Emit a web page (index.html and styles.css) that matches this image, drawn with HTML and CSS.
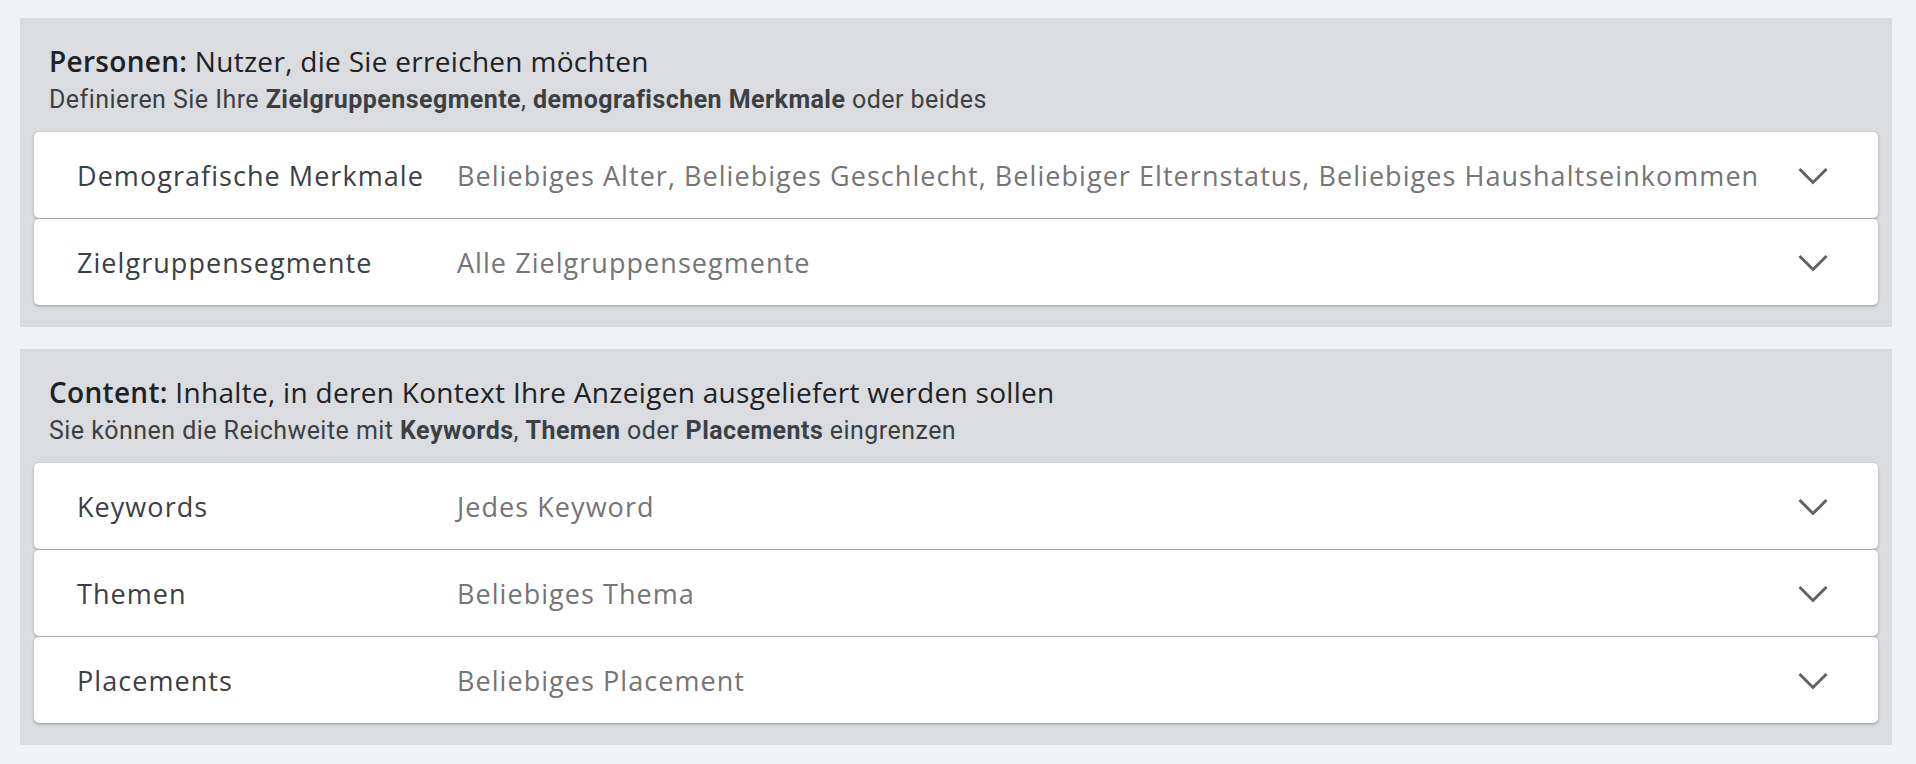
FILE: index.html
```html
<!DOCTYPE html>
<html lang="de">
<head>
<meta charset="utf-8">
<title>Targeting</title>
<link rel="stylesheet" href="styles.css">
</head>
<body>
<main class="page">
  <section class="panel">
    <header class="panel-head">
      <h2 class="panel-title"><strong>Personen:</strong> Nutzer, die Sie erreichen möchten</h2>
      <p class="panel-sub">Definieren Sie Ihre <b>Zielgruppensegmente</b>, <b>demografischen Merkmale</b> oder beides</p>
    </header>
    <div class="rows">
      <div class="row">
        <span class="row-label">Demografische Merkmale</span>
        <span class="row-value">Beliebiges Alter, Beliebiges Geschlecht, Beliebiger Elternstatus, Beliebiges Haushaltseinkommen</span>
        <svg class="chev" viewBox="0 0 30 18" width="30" height="18"><polyline points="1.5,2 15,15.5 28.5,2"/></svg>
      </div>
      <div class="row">
        <span class="row-label">Zielgruppensegmente</span>
        <span class="row-value">Alle Zielgruppensegmente</span>
        <svg class="chev" viewBox="0 0 30 18" width="30" height="18"><polyline points="1.5,2 15,15.5 28.5,2"/></svg>
      </div>
    </div>
  </section>
  <section class="panel">
    <header class="panel-head">
      <h2 class="panel-title"><strong>Content:</strong> Inhalte, in deren Kontext Ihre Anzeigen ausgeliefert werden sollen</h2>
      <p class="panel-sub">Sie können die Reichweite mit <b>Keywords</b>, <b>Themen</b> oder <b>Placements</b> eingrenzen</p>
    </header>
    <div class="rows">
      <div class="row">
        <span class="row-label">Keywords</span>
        <span class="row-value">Jedes Keyword</span>
        <svg class="chev" viewBox="0 0 30 18" width="30" height="18"><polyline points="1.5,2 15,15.5 28.5,2"/></svg>
      </div>
      <div class="row">
        <span class="row-label">Themen</span>
        <span class="row-value">Beliebiges Thema</span>
        <svg class="chev" viewBox="0 0 30 18" width="30" height="18"><polyline points="1.5,2 15,15.5 28.5,2"/></svg>
      </div>
      <div class="row">
        <span class="row-label">Placements</span>
        <span class="row-value">Beliebiges Placement</span>
        <svg class="chev" viewBox="0 0 30 18" width="30" height="18"><polyline points="1.5,2 15,15.5 28.5,2"/></svg>
      </div>
    </div>
  </section>
</main>
</body>
</html>
```

FILE: styles.css
```css
html, body {
  margin: 0;
  padding: 0;
  background: #f1f3f4;
}
.page {
  padding: 18px 24px 20px 20px;
  display: flex;
  flex-direction: column;
  gap: 22px;
}
.panel {
  background: #dadce0;
  padding: 0 14px 22px 14px;
}
.panel-head {
  padding: 25px 15px 16px 15px;
}
.panel-title {
  margin: 0;
  font-family: "Open Sans", Roboto, sans-serif;
  font-weight: 400;
  font-size: 28px;
  line-height: 36px;
  letter-spacing: 0.3px;
  color: #202124;
}
.panel-title strong {
  font-weight: 600;
}
.panel-sub {
  margin: 5px 0 0 0;
  font-family: Roboto, "Liberation Sans", sans-serif;
  font-size: 25px;
  line-height: 32px;
  color: #3c4043;
  letter-spacing: 0.45px;
}
.panel-sub b {
  font-weight: 700;
}
.rows {
  display: flex;
  flex-direction: column;
  gap: 1px;
}
.row {
  background: #fff;
  border-radius: 5px;
  box-shadow: 0 1px 2px rgba(60,64,67,0.3), 0 1px 3px 1px rgba(60,64,67,0.1);
  height: 86px;
  display: flex;
  align-items: center;
  padding: 0 50px 0 43px;
  font-family: "Open Sans", Roboto, sans-serif;
  font-size: 27px;
  letter-spacing: 1.05px;
}
.row-label {
  width: 380px;
  flex: none;
  color: #3c4043;
}
.row-value {
  flex: 1;
  color: #757575;
}
.chev {
  flex: none;
  margin-top: 2px;
  fill: none;
  stroke: #5f6368;
  stroke-width: 3;
}
```
